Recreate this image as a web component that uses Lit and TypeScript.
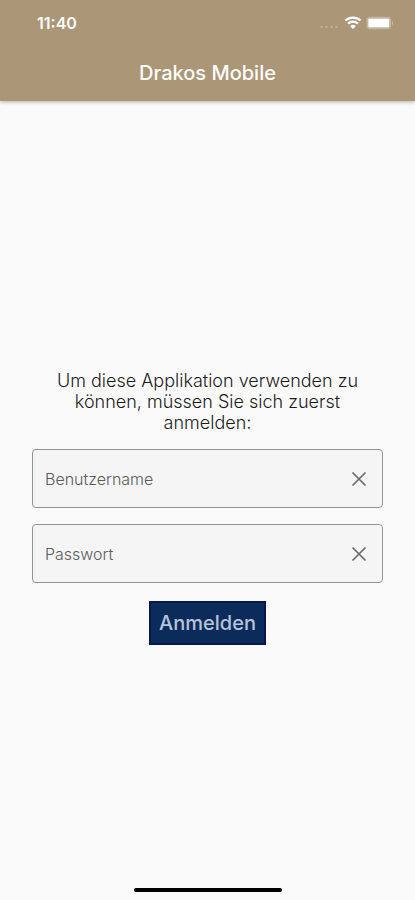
import { LitElement, html, css } from "lit";
import { customElement, property, state } from "lit/decorators.js";

@customElement("status-bar")
class StatusBar extends LitElement {
  static styles = css`
    :host {
      display: flex;
      align-items: center;
      justify-content: space-between;
      height: 46px;
      padding: 0 21px 0 37px;
      color: #fffdf8;
    }
    .time {
      font-size: 16px;
      font-weight: 600;
      line-height: 20px;
    }
    .icons {
      display: block;
      width: 76px;
      height: 16px;
    }
  `;

  render() {
    return html`
      <span class="time">11:40</span>
      <svg class="icons" viewBox="0 0 76 16" aria-hidden="true">
        <g fill="#fff" fill-opacity=".24">
          <rect x="2" y="11" width="3" height="2" rx="1" />
          <rect x="7" y="11" width="3" height="2" rx="1" />
          <rect x="12" y="11" width="3" height="2" rx="1" />
          <rect x="17" y="11" width="3" height="2" rx="1" />
        </g>
        <g fill="none" stroke="#fff" stroke-width="2.3">
          <path d="M27.5 5.5a11 11 0 0 1 15 0" />
          <path d="M30.1 8.6a7 7 0 0 1 9.8 0" />
        </g>
        <path d="M32.2 11.2a4 4 0 0 1 5.6 0L35 14z" fill="#fff" />
        <rect x="48.5" y="1.8" width="24.6" height="12.4" rx="3.4" fill="#fff" fill-opacity=".3" />
        <rect x="50.4" y="3.7" width="20.8" height="8.6" rx="1" fill="#fff" />
        <path d="M74 6c1.4.6 1.4 3.4 0 4z" fill="#fff" fill-opacity=".4" />
      </svg>
    `;
  }
}

@customElement("clearable-field")
class ClearableField extends LitElement {
  @property() label = "";
  @property() type = "text";
  @property() autofill = "";
  @state() private value = "";

  static styles = css`
    :host {
      display: block;
    }
    .box {
      display: flex;
      align-items: center;
      box-sizing: border-box;
      height: 59px;
      border: 1px solid #929395;
      border-radius: 4px;
      background: #f5f5f5;
    }
    .input {
      flex: 1;
      min-width: 0;
      height: 100%;
      box-sizing: border-box;
      padding: 0 0 0 12px;
      border: 0;
      outline: 0;
      background: none;
      color: #222;
      font: inherit;
      font-size: 16px;
      font-weight: 300;
    }
    .input::placeholder {
      color: #5c5c5c;
      opacity: 1;
    }
    .clear {
      display: grid;
      place-items: center;
      width: 46px;
      height: 48px;
      padding: 0;
      border: 0;
      background: none;
      color: #6c6c6c;
      cursor: pointer;
    }
    .cross {
      width: 24px;
      height: 24px;
    }
  `;

  render() {
    return html`
      <div class="box">
        <input
          class="input"
          type=${this.type}
          aria-label=${this.label}
          placeholder=${this.label}
          autocomplete=${this.autofill}
          .value=${this.value}
          @input=${(e: Event) => (this.value = (e.target as HTMLInputElement).value)}
        />
        <button
          class="clear"
          type="button"
          aria-label="${this.label} löschen"
          @click=${() => (this.value = "")}
        >
          <svg class="cross" viewBox="0 0 24 24" aria-hidden="true">
            <path d="M5.5 5.5l13 13M18.5 5.5l-13 13" stroke="currentColor" stroke-width="1.7" fill="none" />
          </svg>
        </button>
      </div>
    `;
  }
}

@customElement("app-root")
class AppRoot extends LitElement {
  static styles = css`
    :host {
      display: flex;
      flex-direction: column;
      min-height: 100vh;
      background: #fafafa;
      font-family: Inter, "Liberation Sans", sans-serif;
    }
    .header {
      background: #ab9678;
      box-shadow: 0 1px 4px rgba(0, 0, 0, 0.3);
    }
    .title {
      margin: 0;
      padding: 14px 16px;
      color: #fffdf8;
      font-size: 20px;
      font-weight: 500;
      line-height: 27px;
      text-align: center;
    }
    .main {
      flex: 1;
      display: flex;
      flex-direction: column;
      justify-content: center;
      padding: 26px 32px 0;
    }
    .form {
      display: flex;
      flex-direction: column;
      gap: 16px;
    }
    .intro {
      margin: 0;
      padding: 0 16px;
      color: #1c1c1c;
      font-size: 18px;
      font-weight: 300;
      line-height: 21px;
      text-align: center;
    }
    .submit {
      align-self: center;
      height: 44px;
      margin-top: 2px;
      padding: 0 8px;
      border: 2px solid #07164d;
      background: #0b2c5b;
      color: #b9c3da;
      font: inherit;
      font-size: 20px;
      font-weight: 500;
      cursor: pointer;
    }
    .footer {
      display: flex;
      justify-content: center;
      padding-bottom: 8px;
    }
    .handle {
      width: 148px;
      height: 4px;
      border-radius: 2px;
      background: #000;
    }
  `;

  render() {
    return html`
      <header class="header">
        <status-bar></status-bar>
        <h1 class="title">Drakos Mobile</h1>
      </header>
      <main class="main">
        <form class="form" @submit=${(e: Event) => e.preventDefault()}>
          <p class="intro">Um diese Applikation verwenden zu können, müssen Sie sich zuerst anmelden:</p>
          <clearable-field label="Benutzername" autofill="username"></clearable-field>
          <clearable-field label="Passwort" type="password" autofill="current-password"></clearable-field>
          <button class="submit" type="submit">Anmelden</button>
        </form>
      </main>
      <footer class="footer"><div class="handle"></div></footer>
    `;
  }
}
